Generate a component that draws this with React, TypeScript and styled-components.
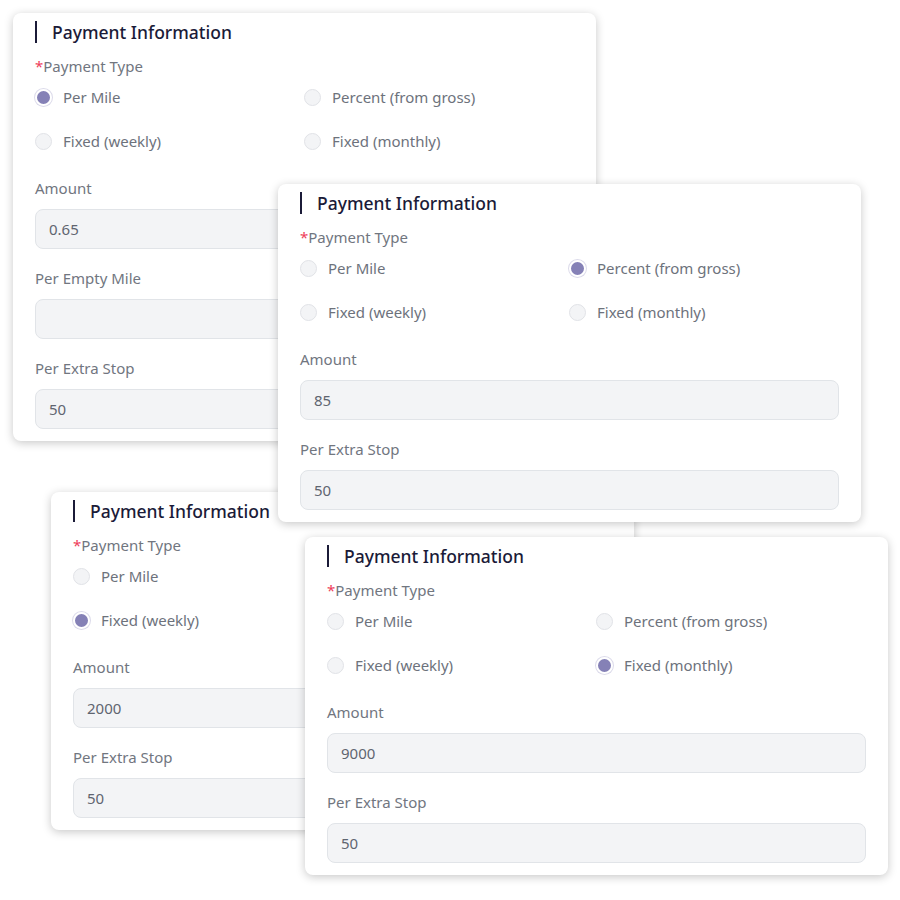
import React from 'react';
import styled, { createGlobalStyle } from 'styled-components';

type PayType = 'mile' | 'percent' | 'weekly' | 'monthly';

interface CardData {
  id: number;
  left: number;
  top: number;
  z: number;
  selected: PayType;
  fields: Array<{ label: string; value: string }>;
}

const options: Array<{ key: PayType; label: string }> = [
  { key: 'mile', label: 'Per Mile' },
  { key: 'percent', label: 'Percent (from gross)' },
  { key: 'weekly', label: 'Fixed (weekly)' },
  { key: 'monthly', label: 'Fixed (monthly)' },
];

const cards: CardData[] = [
  {
    id: 1,
    left: 13,
    top: 13,
    z: 1,
    selected: 'mile',
    fields: [
      { label: 'Amount', value: '0.65' },
      { label: 'Per Empty Mile', value: '' },
      { label: 'Per Extra Stop', value: '50' },
    ],
  },
  {
    id: 3,
    left: 51,
    top: 492,
    z: 2,
    selected: 'weekly',
    fields: [
      { label: 'Amount', value: '2000' },
      { label: 'Per Extra Stop', value: '50' },
    ],
  },
  {
    id: 2,
    left: 278,
    top: 184,
    z: 3,
    selected: 'percent',
    fields: [
      { label: 'Amount', value: '85' },
      { label: 'Per Extra Stop', value: '50' },
    ],
  },
  {
    id: 4,
    left: 305,
    top: 537,
    z: 4,
    selected: 'monthly',
    fields: [
      { label: 'Amount', value: '9000' },
      { label: 'Per Extra Stop', value: '50' },
    ],
  },
];

const GlobalStyle = createGlobalStyle`
  body {
    margin: 0;
    background: #ffffff;
    font-family: 'Noto Sans', 'Roboto', sans-serif;
  }
`;

const PaymentCard: React.FC<{ card: CardData }> = ({ card }) => (
  <Card style={{ left: card.left, top: card.top, zIndex: card.z }}>
    <Title>Payment Information</Title>
    <TypeLabel>
      <Required>*</Required>
      Payment Type
    </TypeLabel>
    <RadioGrid>
      {options.map((opt) => (
        <RadioItem key={opt.key}>
          <RadioDot checked={opt.key === card.selected} />
          {opt.label}
        </RadioItem>
      ))}
    </RadioGrid>
    <Fields>
      {card.fields.map((field) => (
        <Field key={field.label}>
          <Label>{field.label}</Label>
          <Input>{field.value}</Input>
        </Field>
      ))}
    </Fields>
  </Card>
);

const App: React.FC = () => (
  <>
    <GlobalStyle />
    <Canvas>
      {cards.map((card) => (
        <PaymentCard key={card.id} card={card} />
      ))}
    </Canvas>
  </>
);

const Canvas = styled.div`
  position: relative;
  width: 900px;
  height: 900px;
  overflow: hidden;
`;

const Card = styled.div`
  position: absolute;
  box-sizing: border-box;
  width: 583px;
  padding: 8px 22px 12px;
  background: #ffffff;
  border-radius: 8px;
  box-shadow: 0 2px 10px rgba(0, 0, 0, 0.22);
`;

const Title = styled.div`
  height: 22px;
  padding-left: 15px;
  border-left: 2px solid #1b1b38;
  color: #1b1b38;
  font-size: 17.5px;
  font-weight: 500;
  line-height: 22px;
`;

const Label = styled.div`
  color: #71767f;
  font-size: 15px;
  line-height: 22px;
`;

const TypeLabel = styled(Label)`
  margin-top: 12px;
`;

const Required = styled.span`
  color: #ee3d5a;
`;

const RadioGrid = styled.div`
  display: grid;
  grid-template-columns: 269px 269px;
  row-gap: 22px;
  margin: 9px 0 25px;
`;

const RadioItem = styled.div`
  display: flex;
  align-items: center;
  gap: 11px;
  height: 22px;
  color: #6d727c;
  font-size: 15px;
`;

const RadioDot = styled.span<{ checked: boolean }>`
  box-sizing: border-box;
  width: 17px;
  height: 17px;
  border-radius: 50%;
  border: ${({ checked }) => (checked ? '2px solid #ffffff' : '1px solid #e1e3e7')};
  background: ${({ checked }) => (checked ? '#8581b6' : '#f3f4f6')};
  box-shadow: ${({ checked }) => (checked ? '0 0 0 1px #dcdbea' : 'none')};
`;

const Fields = styled.div`
  display: flex;
  flex-direction: column;
  gap: 18px;
`;

const Field = styled.div`
  display: flex;
  flex-direction: column;
  gap: 10px;
`;

const Input = styled.div`
  box-sizing: border-box;
  height: 40px;
  padding: 0 13px;
  border: 1px solid #e1e4e8;
  border-radius: 8px;
  background: #f3f4f6;
  color: #5f6570;
  font-size: 15px;
  line-height: 38px;
`;

export default App;
